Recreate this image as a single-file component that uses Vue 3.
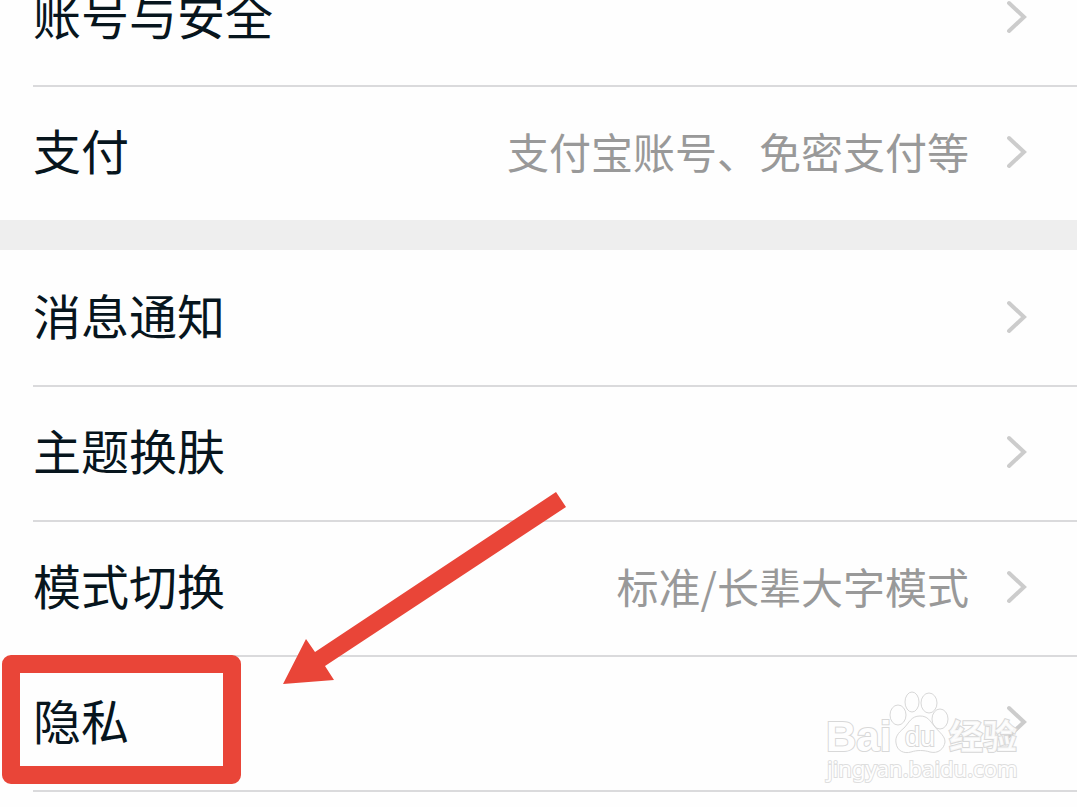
<script setup>
const groups = [
  [
    { label: '账号与安全', note: '' },
    { label: '支付', note: '支付宝账号、免密支付等' },
  ],
  [
    { label: '消息通知', note: '' },
    { label: '主题换肤', note: '' },
    { label: '模式切换', note: '标准/长辈大字模式' },
    { label: '隐私', note: '', marked: true },
  ],
]
</script>

<template>
  <main class="settings">
    <ul v-for="(group, i) in groups" :key="i" class="group">
      <li v-for="row in group" :key="row.label" class="item">
        <a href="#" class="row">
          <span class="label">{{ row.label }}</span>
          <span class="note">{{ row.note }}</span>
          <svg class="chevron" viewBox="0 0 20 34" aria-hidden="true">
            <path d="M2 3 L17 17 L2 31" />
          </svg>
        </a>
        <template v-if="row.marked">
          <div class="frame"></div>
          <svg class="arrow" viewBox="0 0 284 194" aria-hidden="true">
            <path d="M273 0L283 15L42 174L51 188L0 192L23 147L32 160Z" />
          </svg>
          <svg class="watermark" viewBox="0 0 200 100">
            <text class="brand" x="3" y="64">Bai</text>
            <g class="paw">
              <ellipse cx="75" cy="28" rx="8" ry="10" />
              <ellipse cx="89" cy="15" rx="7" ry="10" />
              <ellipse cx="106" cy="16" rx="8" ry="10" />
              <ellipse cx="117" cy="32" rx="8" ry="10" />
              <path d="M97 29C88 29 86 36 81 41C75 46 72 50 73 56C74 64 81 67 88 65C94 63 101 63 107 65C115 67 121 62 122 55C122 49 117 46 112 40C107 34 105 29 97 29Z" />
            </g>
            <text class="du" x="82" y="59">du</text>
            <text class="cn" x="126" y="62">经验</text>
            <text class="url" x="4" y="90">jingyan.baidu.com</text>
          </svg>
        </template>
      </li>
    </ul>
  </main>
</template>

<style>
html {
  overflow: hidden;
  background: #fefefe;
}
</style>

<style scoped>
.settings {
  margin-top: -50px;
  padding-bottom: 50px;
  font-family: "Noto Sans CJK SC", "Noto Sans", sans-serif;
}
.group {
  list-style: none;
  margin: 0;
  padding: 0;
}
.group + .group {
  border-top: 30px solid #eee;
}
.item {
  position: relative;
}
.item + .item::before,
.group:last-child .item:last-child::after {
  content: "";
  position: absolute;
  left: 33px;
  right: 0;
  top: 0;
  height: 2px;
  background: #dadadc;
}
.group:last-child .item:last-child::after {
  top: 100%;
}
.row {
  display: flex;
  align-items: center;
  box-sizing: border-box;
  height: 135px;
  padding: 0 50px 2px 33px;
  text-decoration: none;
}
.label {
  padding-bottom: 6px;
  color: #07151d;
  font-size: 48px;
  line-height: 72px;
}
.note {
  padding-bottom: 2px;
  margin-left: auto;
  color: #999;
  font-size: 42px;
  line-height: 64px;
}
.chevron {
  width: 20px;
  height: 34px;
  margin-left: 38px;
}
.chevron path {
  fill: none;
  stroke: #ccc;
  stroke-width: 4;
  stroke-linecap: round;
}
.frame {
  position: absolute;
  z-index: 1;
  left: 2px;
  top: 0;
  box-sizing: border-box;
  width: 239px;
  height: 129px;
  border: 18px solid #e94538;
  border-radius: 9px;
  pointer-events: none;
}
.arrow {
  position: absolute;
  z-index: 1;
  left: 283px;
  top: -163px;
  width: 284px;
  height: 194px;
  fill: #e94538;
  pointer-events: none;
}
.watermark {
  position: absolute;
  right: 54px;
  top: 32px;
  width: 200px;
  height: 100px;
  fill: #fefefe;
  stroke: #d8d8d8;
  stroke-width: 1;
  pointer-events: none;
}
.watermark text {
  paint-order: stroke;
  stroke-width: 2;
  font-family: "Liberation Sans", "Noto Sans CJK SC", sans-serif;
}
.watermark .brand {
  font-size: 42px;
  font-weight: 700;
}
.watermark .du {
  font-size: 27px;
}
.watermark .cn {
  font-family: "Noto Sans CJK SC", sans-serif;
  font-size: 34px;
  font-weight: 700;
  fill-opacity: 0.85;
}
.watermark .url {
  font-family: "Noto Sans", sans-serif;
  font-size: 22px;
  stroke: #dedede;
}
</style>
